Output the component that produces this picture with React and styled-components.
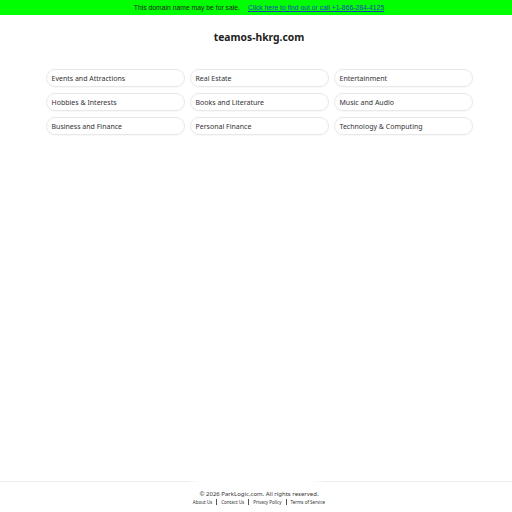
import React from 'react'
import styled, { createGlobalStyle } from 'styled-components'

const Global = createGlobalStyle`
  html, body { margin: 0; padding: 0; background: #fff; }
  body { font-family: 'Noto Sans', sans-serif; }
`

const Page = styled.div`
  min-height: 512px;
  display: flex;
  flex-direction: column;
`

const Banner = styled.div`
  height: 15px;
  padding-left: 6px;
  background: #00ff00;
  display: flex;
  justify-content: center;
  align-items: center;
  gap: 8px;
  font-family: 'Liberation Sans', Arial, sans-serif;
  font-size: 6.8px;
  color: #222;
`

const BannerLink = styled.a`
  color: #1a3dbb;
  text-decoration: underline;
`

const Main = styled.main`
  padding-left: 6px;
`

const Title = styled.h1`
  margin: 14px 0 0;
  text-align: center;
  font-size: 10.3px;
  font-weight: 700;
  color: #222;
  line-height: 16px;
`

const Grid = styled.div`
  width: 427px;
  margin: 24px auto 0;
  display: grid;
  grid-template-columns: repeat(3, 1fr);
  column-gap: 5px;
  row-gap: 6px;
`

const Pill = styled.a`
  height: 18px;
  box-sizing: border-box;
  border: 1px solid #e8e8e8;
  border-radius: 9px;
  display: flex;
  align-items: center;
  padding-left: 5px;
  font-size: 7px;
  color: #333;
  text-decoration: none;
  box-shadow: 0 1px 1px rgba(0, 0, 0, 0.03);
`

const Spacer = styled.div`
  flex: 1;
`

const Footer = styled.footer`
  height: 31px;
  box-sizing: border-box;
  display: flex;
  flex-direction: column;
  align-items: center;
  padding: 9px 0 0 6px;
  background:
    linear-gradient(to right, #ececec 0%, #ececec 36%, transparent 39%, transparent 61%, #ececec 64%, #ececec 100%)
    top / 100% 1px no-repeat;
`

const Copy = styled.div`
  font-size: 6px;
  color: #333;
  line-height: 8px;
`

const Links = styled.div`
  display: flex;
  align-items: center;
  gap: 4px;
  margin-top: 1px;
  font-size: 4.5px;
  color: #333;
`

const Sep = styled.span`
  width: 1px;
  height: 6px;
  background: #555;
`

const categorias = [
  'Events and Attractions',
  'Real Estate',
  'Entertainment',
  'Hobbies & Interests',
  'Books and Literature',
  'Music and Audio',
  'Business and Finance',
  'Personal Finance',
  'Technology & Computing',
]

const enlaces = ['About Us', 'Contact Us', 'Privacy Policy', 'Terms of Service']

const App = () => (
  <Page>
    <Global />
    <Banner>
      <span>This domain name may be for sale.</span>
      <BannerLink href="#">Click here to find out or call +1-866-284-4125</BannerLink>
    </Banner>
    <Main>
      <Title>teamos-hkrg.com</Title>
      <Grid>
        {categorias.map(c => (
          <Pill key={c} href="#">{c}</Pill>
        ))}
      </Grid>
    </Main>
    <Spacer />
    <Footer>
      <Copy>© 2026 ParkLogic.com. All rights reserved.</Copy>
      <Links>
        {enlaces.map((e, i) => (
          <React.Fragment key={e}>
            {i > 0 && <Sep />}
            <span>{e}</span>
          </React.Fragment>
        ))}
      </Links>
    </Footer>
  </Page>
)

export default App
